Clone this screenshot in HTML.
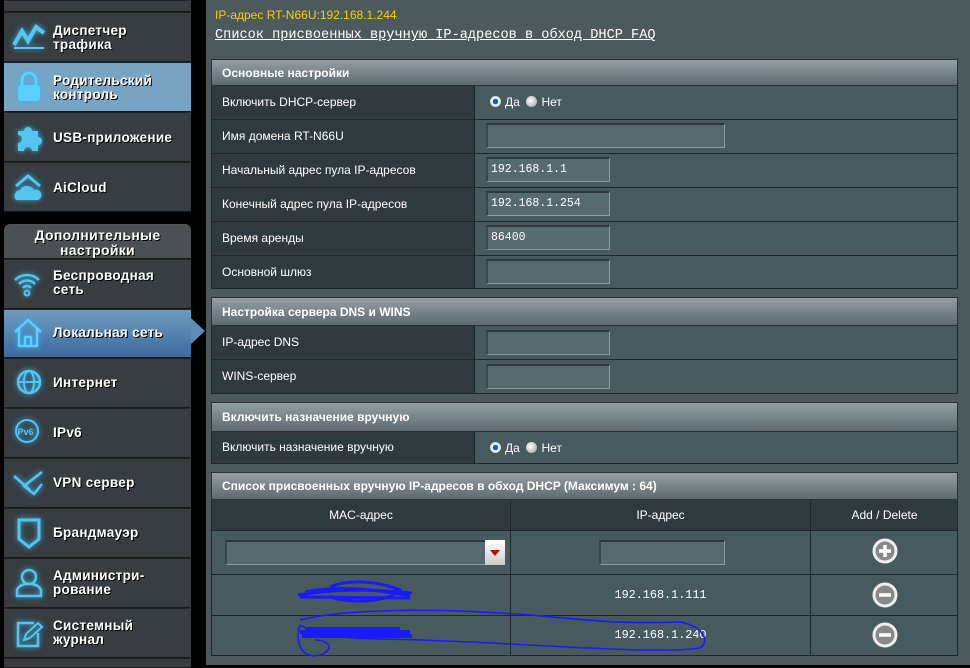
<!DOCTYPE html>
<html><head><meta charset="utf-8">
<style>
*{margin:0;padding:0;box-sizing:border-box}
body{width:970px;height:665px;overflow:hidden;background:#000;font-family:"Liberation Sans",sans-serif;position:relative}
.sb{position:absolute;left:4px;width:187px;background:#373d40;border-top:1px solid #222;border-bottom:1px solid #161a1c}
.sb .t{position:absolute;left:49px;color:#fff;font-weight:bold;font-size:13.5px;line-height:14px;text-shadow:1px 1px 0 #000;letter-spacing:0.3px}
.sb svg{position:absolute;left:8px;filter:drop-shadow(0 0 3px #39b4ee)}
.hl1{background:#78a4c4}
.hl2{background:linear-gradient(#6e9ac0,#3c6c9e)}
#main{position:absolute;left:206px;top:0;width:764px;height:665px;background:#4c5a5e}
.a{position:absolute}
.hd{position:absolute;left:211px;width:747px;background:linear-gradient(#939fa3,#5d6a6f);color:#fff;font-size:12px;font-weight:bold;padding-left:10px;border:1px solid #2a3033}
.row{position:absolute;left:211px;width:747px;border-left:1px solid #20282b;border-right:1px solid #20282b;border-bottom:1px solid #20282b;background:#475a5f}
.row .l{position:absolute;left:0;top:0;bottom:0;width:263px;background:#2f3a3e;border-right:1px solid #20282b;color:#fff;font-size:12px;padding-left:10px}
.inp{position:absolute;background:#566b70;border:1px solid #8a9a9e;border-top:2px solid #2e383b;border-left:2px solid #3a4548;color:#fff;font-family:"Liberation Mono",monospace;font-size:11.5px;padding-left:3px}
.rad{font-size:12px;color:#fff;position:absolute}
.rb{display:inline-block;width:11px;height:11px;border-radius:50%;background:radial-gradient(circle at 40% 40%,#fff,#999);vertical-align:-1px;margin-right:4px}
.rb.on{background:radial-gradient(circle,#0a66b0 0 2.5px,#fff 3px,#aaa 100%)}
.cell{position:absolute;top:0;bottom:0;border-right:1px solid #20282b;text-align:center;color:#fff;font-size:12px}
</style></head><body>

<div class="sb" style="top:0;height:12px"></div>
<div class="sb" style="top:12px;height:50px"><svg width="34" height="30" style="top:8px" viewBox="0 0 34 30"><path d="M2 24 L10 10 L16 20 L24 6 L32 12" stroke="#56c6f2" stroke-width="4" fill="none"/><path d="M2 27 H32" stroke="#56c6f2" stroke-width="2"/></svg><div class="t" style="top:11px">Диспетчер<br>трафика</div></div>
<div class="sb hl1" style="top:62px;height:50px"><svg width="30" height="32" style="top:8px;left:10px" viewBox="0 0 30 32"><path d="M8 14 V9 a7 7 0 0 1 14 0 V14" stroke="#5ad0ff" stroke-width="3" fill="none"/><rect x="4" y="14" width="22" height="16" rx="3" fill="#5ad0ff"/></svg><div class="t" style="top:11px">Родительский<br>контроль</div></div>
<div class="sb" style="top:112px;height:50px"><svg width="30" height="30" style="top:10px;left:10px" viewBox="0 0 30 30"><path d="M4 8 H10 a4 4 0 1 1 8 0 H24 V14 a4 4 0 1 1 0 8 V28 H18 a4 4 0 1 0 -8 0 H4 V20 a4 4 0 1 0 0 -8Z" fill="#55c5f0"/></svg><div class="t" style="top:18px">USB-приложение</div></div>
<div class="sb" style="top:162px;height:50px"><svg width="32" height="32" style="top:9px" viewBox="0 0 32 32"><path d="M4 14 L16 4 L28 14" stroke="#55c5f0" stroke-width="3" fill="none"/><path d="M4 28 a6 6 0 0 1 4 -10 a8 8 0 0 1 14 0 a5 5 0 0 1 4 10Z" fill="#55c5f0"/></svg><div class="t" style="top:18px">AiCloud</div></div>

<div class="sb" style="top:224px;height:35px;border-radius:6px 6px 0 0;background:#4a5154;border-top:1px solid #555"><div class="t" style="left:0;width:187px;text-align:center;top:3px;font-size:14px;line-height:15px">Дополнительные<br>настройки</div></div>
<div class="sb" style="top:259px;height:50px"><svg width="30" height="30" style="top:8px" viewBox="0 0 30 30"><path d="M3 12 a17 17 0 0 1 24 0 M7 16 a11 11 0 0 1 16 0 M11 20 a5 5 0 0 1 8 0" stroke="#55c5f0" stroke-width="2.5" fill="none"/><circle cx="15" cy="25" r="2.5" stroke="#55c5f0" stroke-width="2" fill="none"/></svg><div class="t" style="top:9px">Беспроводная<br>сеть</div></div>
<div class="sb hl2" style="top:309px;height:49px"><svg width="32" height="32" style="top:6px" viewBox="0 0 32 32"><path d="M3 16 L16 4 L29 16 M7 13 V30 H25 V13 M13 30 V21 H19 V30" stroke="#5ad0ff" stroke-width="2.5" fill="none"/></svg><div class="t" style="top:16px">Локальная сеть</div></div>
<div class="a" style="left:191px;top:318px;width:0;height:0;border-top:13px solid transparent;border-bottom:13px solid transparent;border-left:14px solid #5f8cb5"></div>
<div class="sb" style="top:358px;height:50px"><svg width="30" height="30" style="top:8px;left:10px" viewBox="0 0 30 30"><circle cx="15" cy="15" r="11" stroke="#55c5f0" stroke-width="2.5" fill="none"/><ellipse cx="15" cy="15" rx="5" ry="11" stroke="#55c5f0" stroke-width="2" fill="none"/><path d="M4 15 H26" stroke="#55c5f0" stroke-width="2"/></svg><div class="t" style="top:17px">Интернет</div></div>
<div class="sb" style="top:408px;height:50px"><svg width="30" height="30" style="top:9px;left:10px" viewBox="0 0 30 30"><circle cx="13" cy="13" r="11" stroke="#55c5f0" stroke-width="2" fill="none"/><text x="1" y="17" font-size="9" font-family="Liberation Sans" font-weight="bold" fill="#55c5f0">IPv6</text></svg><div class="t" style="top:17px">IPv6</div></div>
<div class="sb" style="top:458px;height:50px"><svg width="34" height="30" style="top:9px" viewBox="0 0 34 30"><path d="M2 8 L18 22 M30 4 L12 18 L22 26 L30 16" stroke="#55c5f0" stroke-width="2.5" fill="none"/></svg><div class="t" style="top:17px">VPN сервер</div></div>
<div class="sb" style="top:508px;height:50px"><svg width="30" height="32" style="top:8px;left:10px" viewBox="0 0 30 32"><path d="M5 3 H25 V22 L15 30 L5 22Z" stroke="#55c5f0" stroke-width="3" fill="none"/></svg><div class="t" style="top:17px">Брандмауэр</div></div>
<div class="sb" style="top:558px;height:50px"><svg width="30" height="32" style="top:8px;left:10px" viewBox="0 0 30 32"><circle cx="15" cy="10" r="7" stroke="#55c5f0" stroke-width="2.5" fill="none"/><path d="M3 29 V24 a10 6 0 0 1 24 0 V29Z" stroke="#55c5f0" stroke-width="2.5" fill="none"/></svg><div class="t" style="top:10px">Администри-<br>рование</div></div>
<div class="sb" style="top:608px;height:50px"><svg width="30" height="30" style="top:10px;left:10px" viewBox="0 0 30 30"><path d="M20 4 H4 V27 H24 V14" stroke="#55c5f0" stroke-width="2.5" fill="none"/><path d="M10 21 L12 15 L24 4 L28 8 L16 19Z" stroke="#55c5f0" stroke-width="2" fill="none"/></svg><div class="t" style="top:10px">Системный<br>журнал</div></div>
<div class="sb" style="top:658px;height:10px"></div>

<div id="main"></div>
<div class="a" style="left:215px;top:8px;color:#ffcc00;font-size:12px">IP-адрес RT-N66U:192.168.1.244</div>
<div class="a" style="left:215px;top:28px;color:#fff;font-family:'Liberation Mono',monospace;font-size:13.6px;text-decoration:underline;white-space:nowrap">Список присвоенных вручную IP-адресов в обход DHCP FAQ</div>

<div class="hd" style="top:59px;height:27px;line-height:26px">Основные настройки</div>
<div class="row" style="top:86px;height:34px"><div class="l" style="line-height:33px">Включить DHCP-сервер</div><div class="rad" style="left:278px;top:9px"><span class="rb on"></span>Да &nbsp;<span class="rb"></span>Нет</div></div>
<div class="row" style="top:120px;height:34px"><div class="l" style="line-height:33px">Имя домена RT-N66U</div><div class="inp" style="left:274px;top:3px;width:239px;height:25px"></div></div>
<div class="row" style="top:154px;height:34px"><div class="l" style="line-height:33px">Начальный адрес пула IP-адресов</div><div class="inp" style="left:274px;top:3px;width:124px;height:25px;line-height:22px">192.168.1.1</div></div>
<div class="row" style="top:188px;height:34px"><div class="l" style="line-height:33px">Конечный адрес пула IP-адресов</div><div class="inp" style="left:274px;top:3px;width:124px;height:25px;line-height:22px">192.168.1.254</div></div>
<div class="row" style="top:222px;height:34px"><div class="l" style="line-height:33px">Время аренды</div><div class="inp" style="left:274px;top:3px;width:124px;height:25px;line-height:22px">86400</div></div>
<div class="row" style="top:256px;height:33px"><div class="l" style="line-height:32px">Основной шлюз</div><div class="inp" style="left:274px;top:3px;width:124px;height:25px"></div></div>

<div class="hd" style="top:297px;height:29px;line-height:28px">Настройка сервера DNS и WINS</div>
<div class="row" style="top:326px;height:34px"><div class="l" style="line-height:33px">IP-адрес DNS</div><div class="inp" style="left:274px;top:4px;width:124px;height:25px"></div></div>
<div class="row" style="top:360px;height:34px"><div class="l" style="line-height:33px">WINS-сервер</div><div class="inp" style="left:274px;top:4px;width:124px;height:25px"></div></div>

<div class="hd" style="top:402px;height:30px;line-height:29px">Включить назначение вручную</div>
<div class="row" style="top:432px;height:32px"><div class="l" style="line-height:31px">Включить назначение вручную</div><div class="rad" style="left:278px;top:9px"><span class="rb on"></span>Да &nbsp;<span class="rb"></span>Нет</div></div>

<div class="hd" style="top:472px;height:28px;line-height:27px">Список присвоенных вручную IP-адресов в обход DHCP (Максимум : 64)</div>
<div class="row" style="top:500px;height:31px;background:#2f3a3e"><div class="cell" style="left:0;width:299px;line-height:30px">MAC-адрес</div><div class="cell" style="left:299px;width:300px;line-height:30px">IP-адрес</div><div class="cell" style="left:599px;width:147px;line-height:30px;border:0">Add / Delete</div></div>
<div class="row" style="top:531px;height:44px"><div class="cell" style="left:0;width:299px"><div class="inp" style="left:13px;top:9px;width:261px;height:25px"></div><div class="a" style="left:273px;top:9px;width:20px;height:25px;background:linear-gradient(#fff,#ccc)"><div class="a" style="left:5px;top:10px;border-left:5px solid transparent;border-right:5px solid transparent;border-top:6px solid #c00"></div></div></div><div class="cell" style="left:299px;width:300px"><div class="inp" style="left:88px;top:9px;width:126px;height:25px"></div></div><div class="cell" style="left:599px;width:147px;border:0"><svg width="26" height="26" style="position:absolute;left:61px;top:7px" viewBox="0 0 26 26"><circle cx="13" cy="13" r="11" fill="#888" stroke="#eee" stroke-width="3"/><path d="M13 7 V19 M7 13 H19" stroke="#fff" stroke-width="3.5"/></svg></div></div>
<div class="row" style="top:575px;height:41px"><div class="cell" style="left:0;width:299px"></div><div class="cell" style="left:299px;width:300px;line-height:40px;font-family:'Liberation Mono',monospace;font-size:11.8px">192.168.1.111</div><div class="cell" style="left:599px;width:147px;border:0"><svg width="26" height="26" style="position:absolute;left:61px;top:7px" viewBox="0 0 26 26"><circle cx="13" cy="13" r="11" fill="#888" stroke="#eee" stroke-width="3"/><path d="M7 13 H19" stroke="#fff" stroke-width="3.5"/></svg></div></div>
<div class="row" style="top:616px;height:40px"><div class="cell" style="left:0;width:299px"></div><div class="cell" style="left:299px;width:300px;line-height:39px;font-family:'Liberation Mono',monospace;font-size:11.8px">192.168.1.240</div><div class="cell" style="left:599px;width:147px;border:0"><svg width="26" height="26" style="position:absolute;left:61px;top:6px" viewBox="0 0 26 26"><circle cx="13" cy="13" r="11" fill="#888" stroke="#eee" stroke-width="3"/><path d="M7 13 H19" stroke="#fff" stroke-width="3.5"/></svg></div></div>

<svg class="a" style="left:0;top:0" width="970" height="665" viewBox="0 0 970 665">
<path d="M298 595 C330 590 360 588 412 593 M300 597 L410 598 M305 592 C340 585 380 590 410 596 M330 587 C350 578 380 582 400 590 C390 600 360 605 330 597" stroke="#1a1aff" stroke-width="3" fill="none"/>
<path d="M300 632 L410 632 M302 636 L412 636 M305 629 L400 629" stroke="#1a1aff" stroke-width="4" fill="none"/>
<path d="M300 625 C295 640 300 660 320 655 C335 650 330 640 315 640 M300 620 C340 610 420 608 500 613 C560 616 600 625 680 622 C700 625 712 640 700 648 C660 654 560 646 470 642 L420 640 C380 638 330 642 300 625" stroke="#1a1aff" stroke-width="1.6" fill="none"/>
</svg>
</body></html>
